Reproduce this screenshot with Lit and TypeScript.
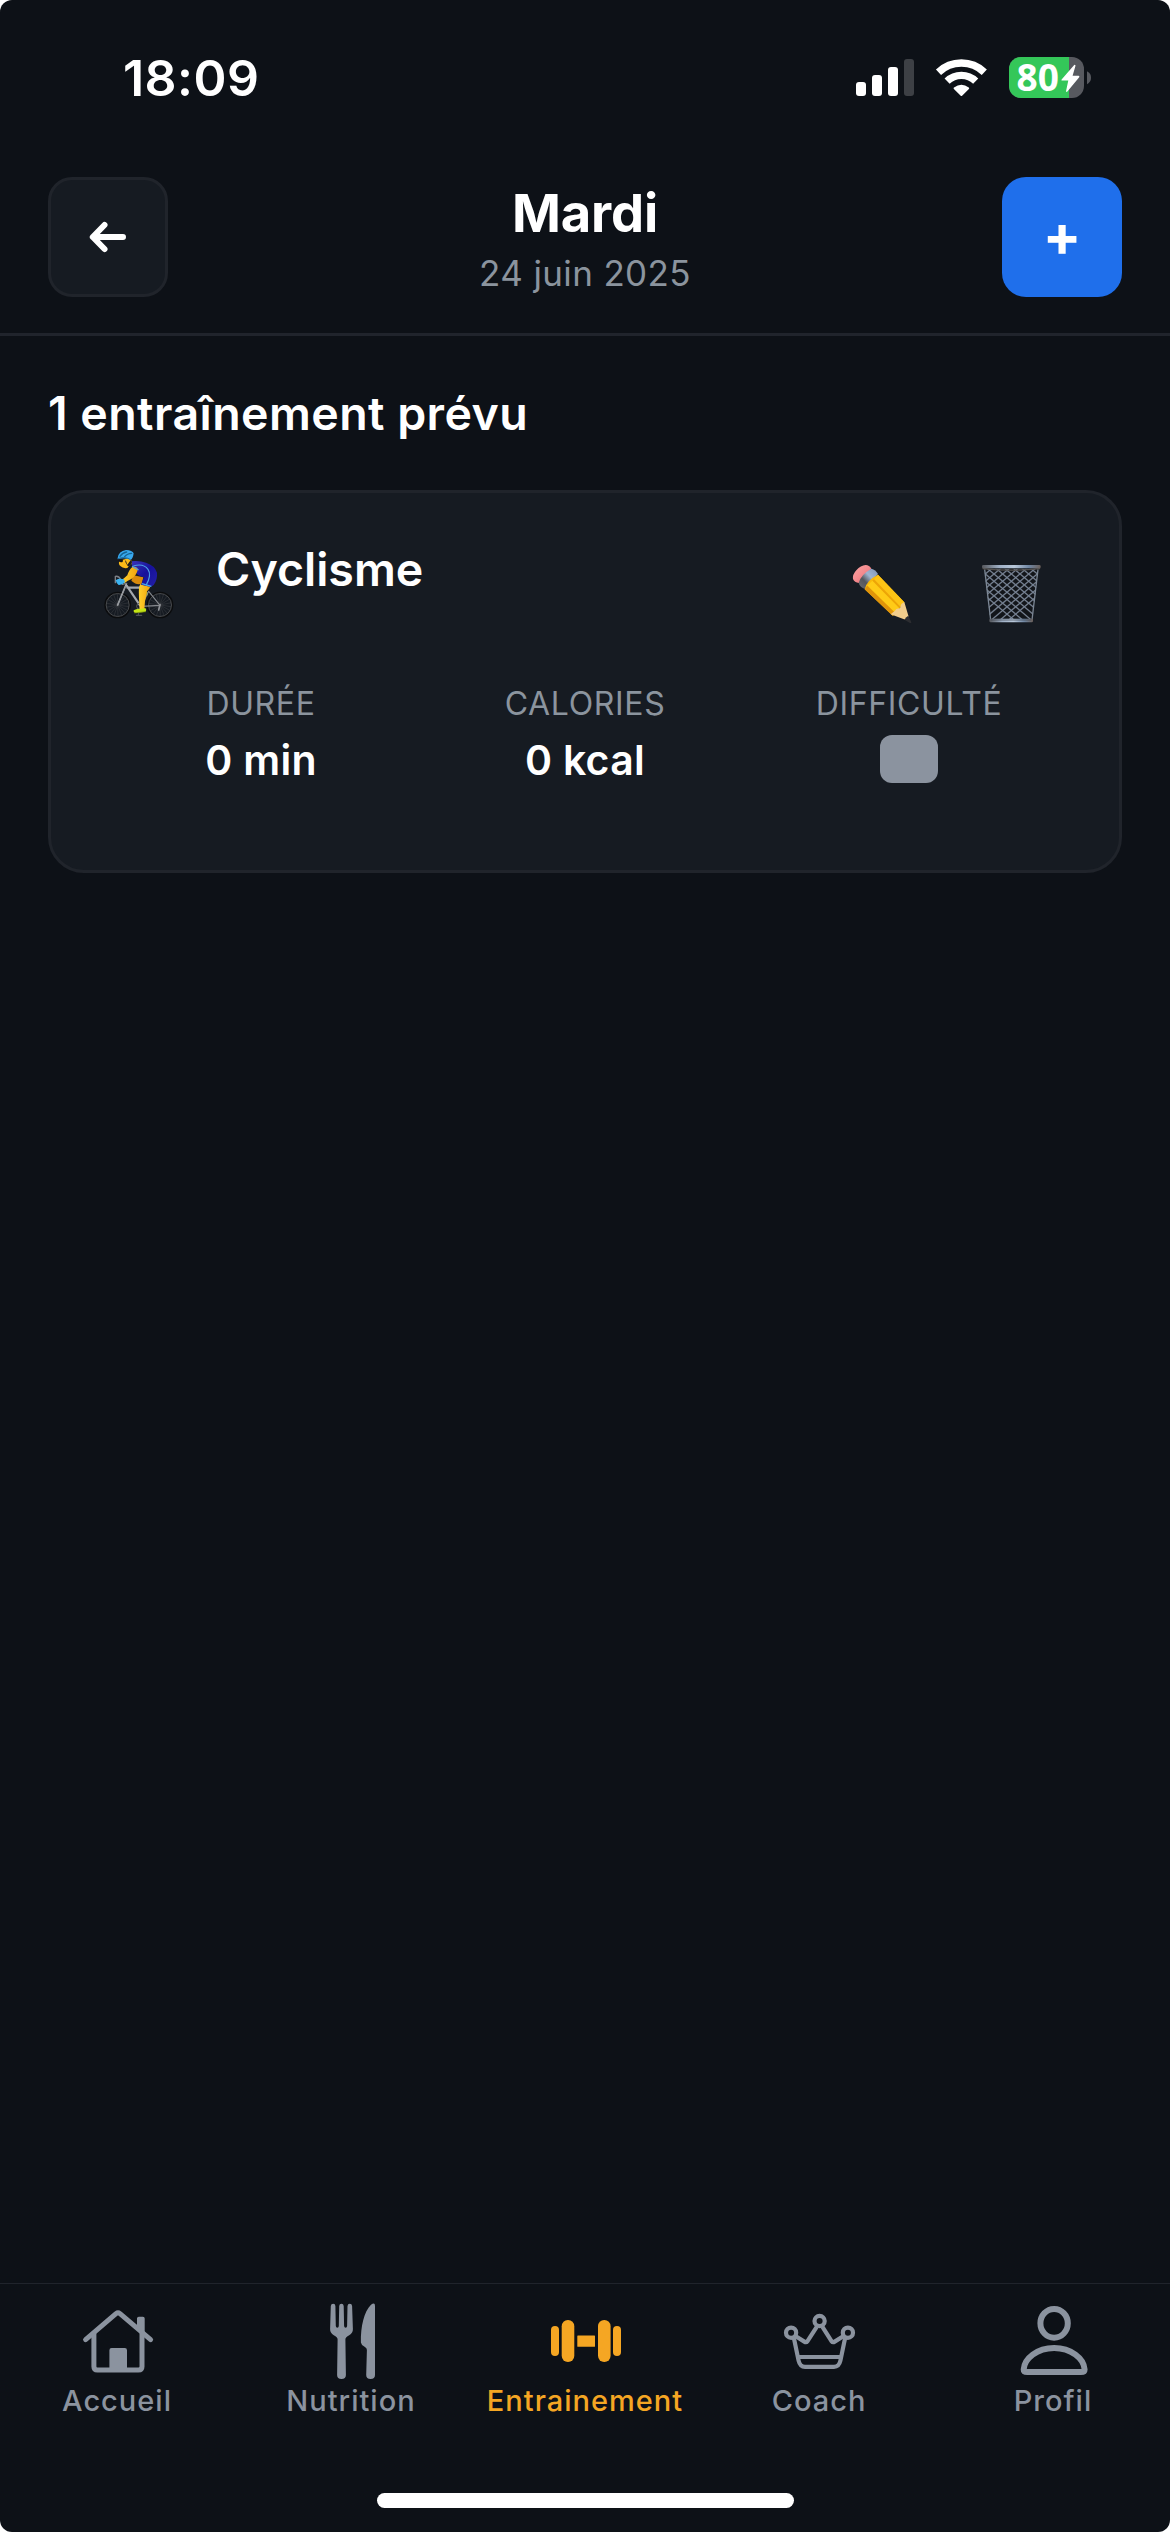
import { LitElement, html, css, svg, type TemplateResult } from "lit";
import { customElement, property } from "lit/decorators.js";
import { classMap } from "lit/directives/class-map.js";

const house = svg`
  <g fill="none" stroke="currentColor" stroke-width="5" stroke-linecap="round" stroke-linejoin="round">
    <path d="M10.6 40.6 41 14.6Q43 13 45 14.6L75.6 40.6"/>
    <path d="M18.9 35V67.5Q18.9 71 22.4 71H63.4Q67 71 67 67.5V35"/>
  </g>
  <path fill="currentColor" d="M62 28V19.5Q62 17.7 63.8 17.7H67.9Q69.7 17.7 69.7 19.5V37L62 30ZM34.4 71V51.2Q34.4 49 36.6 49H49.8Q52 49 52 51.2V71Z"/>`;

const cutlery = svg`
  <path fill="currentColor" d="M21.8 7Q22 4.8 24.2 4.8 26.3 4.8 26.4 7L26.8 27Q27 28.7 28.3 28.7 29.7 28.7 29.8 27L30.2 7Q30.4 4.8 32.4 4.8 34.5 4.8 34.7 7L35.1 27Q35.3 28.7 36.6 28.7 38 28.7 38.1 27L38.5 7Q38.7 4.8 40.8 4.8 42.9 4.8 43.1 7L43.9 30Q44 34 40.2 36.2 36.4 38 36.4 40.5L36.9 76Q36.9 80 32.5 80 28.1 80 28.1 76L28.6 40.5Q28.6 38 24.8 36.2 21 34 21.1 30Z"/>
  <path fill="currentColor" d="M66 7V76Q66 80 61.6 80 57.2 80 57.2 76L57.9 51Q58 49.3 55.6 47.8 52 45.7 51.9 43.6C51.6 27 55 13 62 5.8Q66 2.9 66 7Z"/>`;

const dumbbell = svg`
  <g fill="currentColor">
    <rect x="8" y="27" width="8" height="30" rx="4"/>
    <rect x="18.7" y="21" width="12.6" height="42" rx="6.2"/>
    <rect x="34.3" y="36.4" width="17.7" height="11.4" rx=".6"/>
    <rect x="55" y="21" width="12.6" height="42" rx="6.2"/>
    <rect x="70" y="27" width="8" height="30" rx="4"/>
  </g>`;

const crown = svg`
  <g fill="none" stroke="currentColor" stroke-width="4.2" stroke-linejoin="round">
    <circle cx="14.1" cy="33.7" r="5.1"/>
    <circle cx="42.6" cy="22" r="5.1"/>
    <circle cx="70.9" cy="33.7" r="5.1"/>
    <path d="M16.8 38.6 21.6 61.6Q23 67.8 28 67.8H57Q62 67.8 63.4 61.6L68.2 38.6"/>
    <path d="M18.4 37 27.3 42.6Q29.2 43.8 30.5 42.1L39.9 27.6M66.6 37 57.7 42.6Q55.8 43.8 54.5 42.1L45.3 27.6M21 58H64"/>
  </g>`;

const person = svg`
  <g fill="none" stroke="currentColor" stroke-width="6" stroke-linejoin="round">
    <ellipse cx="43.1" cy="24.3" rx="13.7" ry="14.4"/>
    <path d="M12.7 70.4C13.4 59.6 26 49.1 43.1 49.1S72.8 59.6 73.6 70.4Q73.6 73 70 73H16.3Q12.7 73 12.7 70.4Z"/>
  </g>`;

const spokes = (cx: number, cy: number) =>
  Array.from({ length: 9 }, (_, i) => {
    const a = (i * Math.PI) / 9 + 0.15;
    const dx = Math.cos(a) * 34;
    const dy = Math.sin(a) * 34;
    return svg`<line x1=${cx - dx} y1=${cy - dy} x2=${cx + dx} y2=${cy + dy}/>`;
  });

const cyclist = html`<svg class="cyclist" viewBox="36 51 222 222" aria-hidden="true">
  <defs>
    <linearGradient id="suit" x1="0" y1="0" x2="1" y2="1">
      <stop offset="0" stop-color="#3a35b8"/><stop offset=".5" stop-color="#17119b"/><stop offset="1" stop-color="#2320a8"/>
    </linearGradient>
    <linearGradient id="skin" x1="0" y1="0" x2="1" y2="0">
      <stop offset="0" stop-color="#ffd02c"/><stop offset="1" stop-color="#f0a20c"/>
    </linearGradient>
  </defs>
  <g fill="none" stroke="#45474a" stroke-width="1.3">${spokes(83, 225)}${spokes(210, 225)}</g>
  <g fill="none">
    <g stroke="#0b0c0e" stroke-width="6"><circle cx="83" cy="225" r="37"/><circle cx="210" cy="225" r="37"/></g>
    <g stroke="#56585b" stroke-width="2.4"><circle cx="83" cy="225" r="34.5"/><circle cx="210" cy="225" r="34.5"/></g>
  </g>
  <path d="M124 152Q142 168 156 160L160 142 130 136Z" fill="#d98a0c"/>
  <path d="M168 184Q178 188 172 197L164 196Z" fill="#8fae10"/>
  <g fill="none" stroke-linejoin="round" stroke-linecap="round">
    <path d="M154 229 176 184 210 226 154 229" stroke="#85888d" stroke-width="3.4"/>
    <path d="M110 167 150 226M112 173H168" stroke="#a4a8ae" stroke-width="6.5"/>
    <path d="M83 225 109 162" stroke="#b3b6bb" stroke-width="5"/>
    <path d="M83 225 107 168" stroke="#6f7277" stroke-width="1.5"/>
    <path d="M76 158V139Q86 137 92 148M97 163 110 160" stroke="#7d8188" stroke-width="4"/>
    <circle cx="150" cy="229" r="10" stroke="#5d6065" stroke-width="3"/>
    <path d="M150 230 145 254M139 256H155" stroke="#4e5156" stroke-width="3.5"/>
    <path d="M210 224 206 240" stroke="#909398" stroke-width="5"/>
  </g>
  <path d="M147 172Q149 162 156 158L182 168Q178 178 171 184L168 200 165 214 163 239H149L147 205Q146 184 147 172Z" fill="url(#skin)"/>
  <path d="M131 241Q143 234 149 237L166 234Q171 239 167 245L141 249Q130 251 131 241Z" fill="#c5e515"/>
  <path d="M133 249 168 245" stroke="#6f830f" stroke-width="2"/>
  <path d="M124 94Q148 91 168 98 194 106 201 128 203 149 191 165L182 171 153 164Q158 149 163 142 141 139 127 113Z" fill="url(#suit)"/>
  <path d="M130 108Q160 99 174 118 186 135 168 166" fill="none" stroke="#4b9fe8" stroke-width="3.5"/>
  <path d="M156 161 184 169" stroke="#45a8ed" stroke-width="4"/>
  <path d="M127 111Q139 109 144 117 139 138 124 147 110 153 103 160L94 151Q105 143 112 136 117 119 127 111Z" fill="url(#skin)"/>
  <path d="M126 109 146 120" stroke="#4b9fe8" stroke-width="3.5"/>
  <path d="M77 151Q87 144 102 148L105 156Q97 166 86 165 78 158 77 151Z" fill="#3bb3f0"/>
  <path d="M88 92 118 84Q130 92 124 103 116 108 112 114 98 116 92 109 84 103 88 92Z" fill="#fcbb18"/>
  <path d="M86 90 99 89 98 96Q91 98 86 94Z" fill="#141414"/>
  <path d="M107 90 112 104 124 88 126 97Q121 111 113 108L106 96Z" fill="#1b1c20"/>
  <path d="M83 84Q86 63 108 60 127 61 131 70 129 85 122 90 106 81 83 88Z" fill="#38a8ee"/>
  <path d="M90 79Q98 68 110 66M104 80Q112 70 125 70" fill="none" stroke="#146596" stroke-width="4" stroke-linecap="round"/>
  <path d="M84 86Q104 78 122 89" fill="none" stroke="#17608f" stroke-width="2.5"/>
</svg>`;

const pencil = html`<svg class="glyph" viewBox="96 72 180 180" aria-hidden="true">
  <defs>
    <linearGradient id="eraser" x1="0" y1="0" x2="1" y2="1">
      <stop offset="0" stop-color="#f9a5a4"/><stop offset=".5" stop-color="#f58a8e"/><stop offset="1" stop-color="#d8606a"/>
    </linearGradient>
    <linearGradient id="ferrule" x1="1" y1="0" x2="0" y2="1">
      <stop offset="0" stop-color="#7f93b5"/><stop offset=".4" stop-color="#9fb4d0"/><stop offset=".65" stop-color="#54565c"/><stop offset="1" stop-color="#6c6c70"/>
    </linearGradient>
  </defs>
  <path d="M99 117Q97 104 109 91 122 76 137 75 148 75 154 86L117 129Q103 127 99 117Z" fill="url(#eraser)"/>
  <path d="M154 86Q167 89 174 102L135 147Q120 143 116 129 122 104 154 86Z" fill="url(#ferrule)"/>
  <path d="M174 104 253 187 219 228 134 148Q139 121 174 104Z" fill="#f9b90b"/>
  <path d="M174 104 253 187 241 200 162 118Z" fill="#fdc415"/>
  <path d="M162 118 241 200 237 204 157 122Z" fill="#eda508"/>
  <path d="M157 122 237 204 225 218 142 137Z" fill="#ffcb17"/>
  <path d="M142 137 225 218 218 227 134 148Z" fill="#e0940a"/>
  <path d="M253 186 266 230 258 240 212 223 224 213 229 207 240 204 244 192Z" fill="#f2cd8c"/>
  <path d="M265 227 274 247Q275 250 270 249L253 239Q259 230 265 227Z" fill="#2c2d31"/>
</svg>`;

const mesh = Array.from({ length: 15 }, (_, i) => {
  const x = 392 + i * 26;
  return svg`<path d=${`M${x} 80 ${x + 190} 240M${x} 80 ${x - 190} 240`}/>`;
});

const trash = html`<svg class="glyph" viewBox="483 72 180 180" aria-hidden="true">
  <defs>
    <linearGradient id="rim" x1="0" y1="0" x2="1" y2="0">
      <stop offset="0" stop-color="#55575c"/><stop offset=".3" stop-color="#9fb0c6"/><stop offset=".55" stop-color="#b9c8da"/><stop offset=".8" stop-color="#6f86a3"/><stop offset="1" stop-color="#6a5f5a"/>
    </linearGradient>
    <clipPath id="basket"><path d="M493 86H655L637 240H511Z"/></clipPath>
  </defs>
  <path d="M493 86H655L637 240H511Z" fill="#12151a"/>
  <g clip-path="url(#basket)" fill="none">
    <g stroke="#5a6069" stroke-width="4.6">${mesh}</g>
    <g stroke="#8293aa" stroke-width="2">${mesh}</g>
  </g>
  <path d="M494 88 512 240M654 88 636 240" stroke="#7b8694" stroke-width="4"/>
  <path d="M487 83Q574 94 661 83L660 88Q574 97 488 88Z" fill="#54514f"/>
  <rect x="486" y="75" width="176" height="10" rx="4" fill="url(#rim)"/>
  <rect x="508" y="236" width="131" height="11" rx="4" fill="url(#rim)"/>
  <path d="M513 240H634" stroke="#3b4048" stroke-width="2"/>
</svg>`;

@customElement("status-bar")
class StatusBar extends LitElement {
  static styles = css`
    :host { display: flex; height: 141px; box-sizing: border-box; padding: 14px 79px 0 123px; justify-content: space-between; align-items: center; }
    .time { font-size: 50px; font-weight: 600; letter-spacing: 0.48px; line-height: 60px; color: #fff; }
    .icons { display: flex; gap: 22px; align-items: center; }
    .icons svg { display: block; height: 41px; overflow: visible; }
  `;
  render() {
    return html`
      <span class="time">18:09</span>
      <div class="icons">
        <svg width="58" viewBox="0 0 58 41" fill="#fff">
          <rect y="25" width="10" height="14" rx="3"/>
          <rect x="16" y="18" width="10" height="21" rx="3"/>
          <rect x="32" y="10" width="10" height="29" rx="3"/>
          <rect x="48" y="2" width="10" height="37" rx="3" fill="#3d4045"/>
        </svg>
        <svg width="51" viewBox="0 0 51 41" fill="none" stroke="#fff">
          <path d="M2.5 15.2A33.2 33.2 0 0 1 48.3 15.2M11.1 24.1A20.7 20.7 0 0 1 39.7 24.1" stroke-width="7.4"/>
          <path d="M18.6 31.2Q25.4 26.2 32.2 31.2L25.4 38Z" fill="#fff" stroke-width="2" stroke-linejoin="round"/>
        </svg>
        <svg width="82" viewBox="0 0 82 41">
          <clipPath id="cell"><rect width="75" height="41" rx="12"/></clipPath>
          <g clip-path="url(#cell)">
            <rect width="75" height="41" fill="#57595f"/>
            <rect width="60" height="41" fill="#34c759"/>
          </g>
          <path d="M78 14.3Q82 16.3 82 20.7T78 27.2Z" fill="#57595f"/>
          <text x="7.5" y="34" font-family="Open Sans, sans-serif" font-size="37" font-weight="700" fill="#fff">80</text>
          <path d="M65.2 8 52.6 22.4Q52 23.6 53.2 23.6H59.3L57 34.2Q57.2 35.6 58.4 34.6L70.2 20.2Q70.9 18.8 69.6 18.7H63.6L66.5 8.8Q66.3 7 65.2 8Z" fill="#fff"/>
        </svg>
      </div>`;
  }
}

@customElement("day-header")
class DayHeader extends LitElement {
  @property() day = "";
  @property() date = "";
  static styles = css`
    :host { display: flex; justify-content: space-between; align-items: flex-start; padding: 36px 48px; border-bottom: 3px solid #20242c; }
    .btn { display: flex; align-items: center; justify-content: center; width: 120px; height: 120px; box-sizing: border-box; border-radius: 24px; border: 3px solid #20242b; background: #161b22; padding: 0; color: #fff; font-family: inherit; }
    .add { border: 0; background: #1f6feb; font-size: 57px; font-weight: 700; line-height: 60px; padding-bottom: 3px; }
    .titles { display: flex; flex-direction: column; align-items: center; gap: 8px; padding-top: 6px; height: 114px; }
    .day { font-size: 52.5px; font-weight: 700; line-height: 60px; letter-spacing: -0.15px; color: #fff; }
    .date { font-size: 35px; line-height: 44px; letter-spacing: 0.36px; color: #8b949e; }
  `;
  render() {
    return html`
      <button class="btn" aria-label="Retour">
        <svg width="40" height="40" viewBox="0 0 40 40" fill="none" stroke="#fff" stroke-width="6" stroke-linecap="round" stroke-linejoin="round">
          <path d="M35 20H5M16.5 8 4.8 20 16.5 32"/>
        </svg>
      </button>
      <div class="titles"><span class="day">${this.day}</span><span class="date">${this.date}</span></div>
      <button class="btn add">+</button>`;
  }
}

@customElement("workout-card")
class WorkoutCard extends LitElement {
  @property() name = "";
  @property({ type: Number }) minutes = 0;
  @property({ type: Number }) calories = 0;
  static styles = css`
    :host { display: block; box-sizing: border-box; height: 383px; padding: 48px; border: 3px solid #20242b; border-radius: 36px; background: #161b22; }
    .head { display: flex; align-items: flex-start; height: 143px; }
    .cyclist { width: 74px; height: 74px; margin: 6px 0 0 3px; }
    .name { margin-left: 40px; font-size: 46.5px; font-weight: 600; line-height: 56px; color: #fff; }
    .actions { display: flex; gap: 69px; margin: 23px 30px 0 auto; }
    .glyph { display: block; width: 60px; height: 60px; }
    .stats { display: grid; grid-template-columns: repeat(3, 1fr); }
    .stat { display: flex; flex-direction: column; align-items: center; gap: 11px; }
    .label { font-size: 32px; line-height: 40px; letter-spacing: 0.65px; color: #8b949e; }
    .value { font-size: 41px; font-weight: 600; line-height: 50px; letter-spacing: 0.3px; color: #fff; }
    .badge { width: 58px; height: 48px; border-radius: 12px; background: #8b939f; }
  `;
  render() {
    return html`
      <div class="head">
        ${cyclist}
        <span class="name">${this.name}</span>
        <div class="actions">${pencil}${trash}</div>
      </div>
      <div class="stats">
        <div class="stat"><span class="label">DURÉE</span><span class="value">${this.minutes} min</span></div>
        <div class="stat"><span class="label">CALORIES</span><span class="value">${this.calories} kcal</span></div>
        <div class="stat"><span class="label">DIFFICULTÉ</span><span class="badge"></span></div>
      </div>`;
  }
}

interface Tab { label: string; icon: TemplateResult | ReturnType<typeof svg>; active?: boolean; }

@customElement("tab-bar")
class TabBar extends LitElement {
  private tabs: Tab[] = [
    { label: "Accueil", icon: house },
    { label: "Nutrition", icon: cutlery },
    { label: "Entrainement", icon: dumbbell, active: true },
    { label: "Coach", icon: crown },
    { label: "Profil", icon: person },
  ];
  static styles = css`
    :host { display: flex; flex-direction: column; align-items: center; height: 249px; box-sizing: border-box; border-top: 1px solid #20242c; padding-top: 15px; }
    .tabs { display: grid; grid-template-columns: repeat(5, 1fr); width: 100%; }
    .tab { display: flex; flex-direction: column; align-items: center; color: #8b939f; }
    .tab.active { color: #f5a623; }
    .tab svg { display: block; width: 84px; height: 84px; }
    .tab span { font-size: 29px; font-weight: 500; line-height: 36px; letter-spacing: 1px; }
    .home { width: 417px; height: 15px; border-radius: 8px; background: #fff; margin-top: 74px; }
  `;
  render() {
    return html`
      <div class="tabs">
        ${this.tabs.map(
          (t) => html`<div class=${classMap({ tab: true, active: !!t.active })}>
            <svg viewBox="0 0 84 84" aria-hidden="true">${t.icon}</svg>
            <span>${t.label}</span>
          </div>`,
        )}
      </div>
      <div class="home"></div>`;
  }
}

@customElement("app-root")
class AppRoot extends LitElement {
  static styles = css`
    :host { display: block; background: #fff; }
    .screen { display: flex; flex-direction: column; width: 1170px; height: 2532px; box-sizing: border-box; border-radius: 12px; overflow: hidden; background: #0d1117; font-family: Inter, "Liberation Sans", sans-serif; }
    main { flex: 1; padding: 49px 48px 0; }
    .heading { margin: 0 0 49px; font-size: 46.5px; font-weight: 600; line-height: 56px; letter-spacing: 0.44px; color: #fff; }
  `;
  render() {
    return html`<div class="screen">
      <status-bar></status-bar>
      <day-header day="Mardi" date="24 juin 2025"></day-header>
      <main>
        <h2 class="heading">1 entraînement prévu</h2>
        <workout-card name="Cyclisme" .minutes=${0} .calories=${0}></workout-card>
      </main>
      <tab-bar></tab-bar>
    </div>`;
  }
}
